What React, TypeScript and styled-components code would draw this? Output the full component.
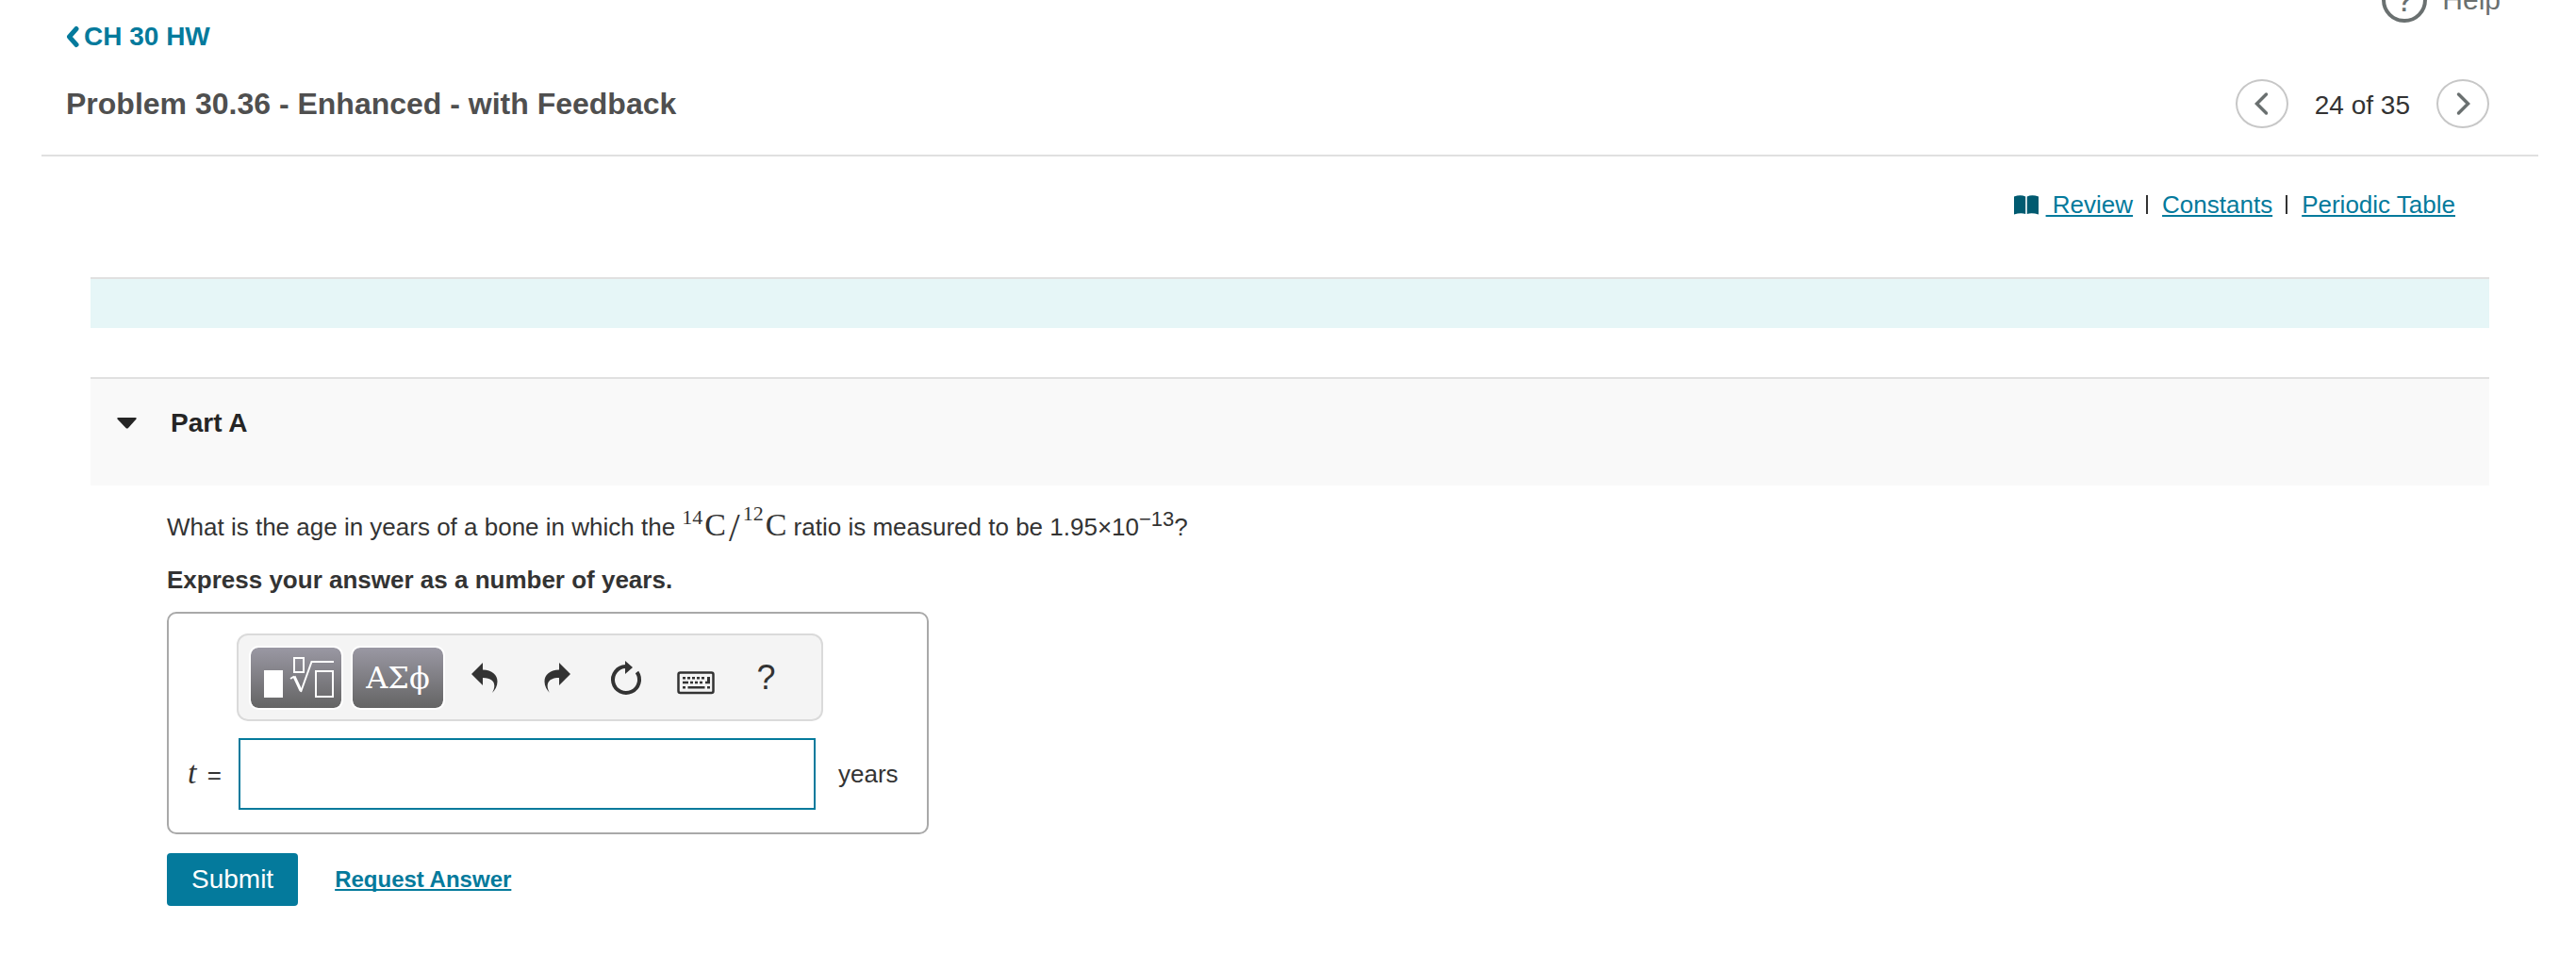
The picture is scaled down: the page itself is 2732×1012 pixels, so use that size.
import React, { useState } from "react";
import styled, { createGlobalStyle, css } from "styled-components";

const color = {
  link: "#047a9c",
  linkDark: "#005a70",
  text: "#333333",
  heading: "#4f4f4f",
  muted: "#6a7070",
  rule: "#e0e0e0",
};

const GlobalStyle = createGlobalStyle`
  *, *::before, *::after { box-sizing: border-box; }
  body {
    margin: 0;
    background: #ffffff;
    color: ${color.text};
    font-family: "Liberation Sans", Arial, sans-serif;
    font-size: 26px;
    line-height: 30px;
  }
  h1, h2, p { margin: 0; }
  button { font-family: inherit; cursor: pointer; }
  svg { display: block; flex: none; }
`;

const underline = css`
  text-decoration: underline;
  text-decoration-thickness: 2px;
  text-underline-offset: 2px;
  text-decoration-skip-ink: none;
`;

const Header = styled.header`
  margin: 0 40px 0 44px;
  border-bottom: 2px solid ${color.rule};
`;

const TopRow = styled.div`
  display: flex;
  justify-content: space-between;
  align-items: flex-start;
  height: 84px;
  padding: 0 40px 0 26px;
`;

const BackLink = styled.a`
  display: flex;
  align-items: center;
  gap: 3px;
  margin-top: 23px;
  color: ${color.link};
  font-size: 28px;
  line-height: 32px;
  font-weight: bold;
  text-decoration: none;
`;

const HelpLink = styled.a`
  display: flex;
  align-items: center;
  gap: 16px;
  margin-top: -24px;
  color: ${color.muted};
  font-size: 30px;
  line-height: 32px;
  text-decoration: none;
`;

const HelpMark = styled.span`
  display: grid;
  place-items: center;
  width: 48px;
  height: 48px;
  border: 4px solid ${color.muted};
  border-radius: 50%;
  font-size: 36px;
`;

const TitleRow = styled.div`
  display: flex;
  justify-content: space-between;
  align-items: center;
  padding: 0 52px 28px 26px;
`;

const Title = styled.h1`
  color: ${color.heading};
  font-size: 32px;
  line-height: 36px;
`;

const Pager = styled.nav`
  display: flex;
  align-items: center;
  gap: 28px;
  font-size: 28px;
  line-height: 32px;
`;

const PagerStatus = styled.span`
  padding-top: 4px;
`;

const PagerButton = styled.button`
  display: grid;
  place-items: center;
  width: 56px;
  height: 52px;
  padding: 0;
  border: 2px solid #c7c7c7;
  border-radius: 50%;
  background: none;
`;

const Main = styled.main`
  margin: 0 92px 0 96px;
`;

const ToolLinks = styled.nav`
  display: flex;
  justify-content: flex-end;
  align-items: center;
  gap: 14px;
  padding: 36px 36px 62px 0;
`;

const ToolLink = styled.a`
  display: flex;
  align-items: center;
  gap: 8px;
  color: ${color.link};
  text-decoration: none;
`;

const LinkText = styled.span`
  white-space: pre;
  ${underline}
`;

const Separator = styled.span`
  width: 2px;
  height: 20px;
  margin-right: 1px;
  background: ${color.text};
`;

const IntroBand = styled.div`
  height: 54px;
  margin-bottom: 52px;
  border-top: 2px solid ${color.rule};
  background: #e6f6f7;
`;

const PartHeader = styled.h2`
  padding: 31px 28px 50px;
  border-top: 2px solid ${color.rule};
  background: #f9f9f9;
  font-size: 28px;
  line-height: 32px;
`;

const PartToggle = styled.button`
  display: flex;
  align-items: center;
  gap: 35px;
  padding: 0;
  border: 0;
  background: none;
  color: #252525;
  font-size: inherit;
  font-weight: inherit;
  line-height: inherit;
`;

const PartBody = styled.section`
  padding: 16px 0 50px 81px;
`;

const Prompt = styled.p<{ $strong?: boolean }>`
  line-height: 56px;
  font-weight: ${(p) => (p.$strong ? "bold" : "normal")};
`;

const MathText = styled.span`
  font-family: "Liberation Serif", "Times New Roman", serif;
  font-size: 34px;
  line-height: 0;
`;

const Mass = styled.sup<{ $raised?: boolean }>`
  margin-right: 2px;
  font-size: 22px;
  line-height: 0;
  vertical-align: ${(p) => (p.$raised ? "16px" : "12px")};
`;

const Slash = styled.span`
  margin: 0 3px;
  font-size: 42px;
  vertical-align: -6px;
`;

const Exponent = styled.sup`
  font-size: 22px;
  line-height: 0;
  vertical-align: 10px;
`;

const AnswerBox = styled.div`
  width: 808px;
  max-width: 100%;
  margin-top: 6px;
  padding: 21px 20px 24px;
  border: 2px solid #a9a9a9;
  border-radius: 10px;
`;

const Toolbar = styled.div`
  display: flex;
  align-items: center;
  gap: 8px;
  width: 622px;
  margin: 0 0 18px 52px;
  padding: 11px 11px 10px;
  border: 2px solid #dadada;
  border-radius: 12px;
  background: #f4f4f4;
`;

const PaletteButton = styled.button`
  display: grid;
  place-items: center;
  width: 100px;
  height: 68px;
  padding: 0;
  border: 2px solid #ffffff;
  border-radius: 10px;
  background: linear-gradient(#9a98a3, #646464) padding-box;
  color: #ffffff;
  font-family: "DejaVu Serif", serif;
  font-size: 32px;
  line-height: 40px;
`;

const IconButton = styled.button`
  display: grid;
  place-items: center;
  width: 67px;
  height: 68px;
  padding: 0 2px 0 0;
  border: 0;
  background: none;
  color: ${color.text};
  font-size: 36px;
  line-height: 40px;
`;

const AnswerRow = styled.div`
  display: flex;
  align-items: center;
`;

const AnswerLabel = styled.label`
  display: flex;
  align-items: baseline;
  justify-content: space-between;
  width: 36px;
  margin-right: 18px;
`;

const Variable = styled.i`
  font-family: "Liberation Serif", "Times New Roman", serif;
  font-size: 34px;
`;

const AnswerInput = styled.input`
  width: 612px;
  height: 76px;
  margin-right: 24px;
  padding: 0 16px;
  border: 2px solid ${color.link};
  outline: none;
  background: #ffffff;
  color: ${color.text};
  font: inherit;
`;

const Actions = styled.div`
  display: flex;
  align-items: center;
  gap: 39px;
  margin-top: 20px;
`;

const SubmitButton = styled.button`
  height: 56px;
  padding: 0 26px;
  border: 0;
  border-radius: 4px;
  background: ${color.link};
  color: #ffffff;
  font-size: 28px;
  line-height: 32px;
`;

const RequestLink = styled.a`
  color: ${color.link};
  font-size: 24px;
  line-height: 28px;
  font-weight: bold;
  ${underline}
`;

const BackChevron = () => (
  <svg width="16" height="24" viewBox="0 0 16 24" fill="none" stroke={color.link} strokeWidth="5" strokeLinecap="round" strokeLinejoin="round" aria-hidden="true">
    <path d="M11 3.500 3.500 12l7.500 8.500" />
  </svg>
);

const Chevron = ({ right }: { right?: boolean }) => (
  <svg width="18" height="28" viewBox="0 0 18 28" fill="none" stroke={color.muted} strokeWidth="3.500" strokeLinecap="round" strokeLinejoin="miter" aria-hidden="true">
    <path d={right ? "M4.500 4 14.500 14 4.500 24" : "M13.500 4 3.500 14 13.500 24"} />
  </svg>
);

const BookIcon = () => (
  <svg width="26" height="21" viewBox="0 0 26 21" fill={color.linkDark} aria-hidden="true">
    <path d="M0 1.500Q7 -1 12.200 1.500V20Q7 18.500 0 20.500ZM26 1.500Q19 -1 13.800 1.500V20Q19 18.500 26 20.500Z" />
  </svg>
);

const TriangleIcon = () => (
  <svg width="22" height="12" viewBox="0 0 22 12" fill="#252525" aria-hidden="true">
    <path d="M1.500 0H19.500Q21.500 .3 20.300 1.800L12 11Q10.800 12 9.500 11L.7 1.800Q-.5 .3 1.500 0Z" />
  </svg>
);

const TemplateIcon = () => (
  <svg width="96" height="64" viewBox="0 0 96 64" fill="none" stroke="#ffffff" strokeWidth="2" aria-hidden="true">
    <rect x="14" y="24" width="20" height="29" fill="#ffffff" stroke="none" />
    <rect x="46" y="11" width="10" height="15" />
    <rect x="69" y="25" width="18" height="27" />
    <path d="M42 33 46 30.500" />
    <path d="M46 30.500 53 45.500" strokeWidth="3" />
    <path d="M53 47 64.500 15H88" />
  </svg>
);

const UndoIcon = () => (
  <svg width="48" height="48" viewBox="0 0 48 48" fill="currentColor" aria-hidden="true">
    <path d="M11 20 23 8V15.500C33 16 38.500 20.500 38.500 28C38.500 33 36 37 33 40C37.500 32 36 24 23 24V32Z" />
  </svg>
);

const RedoIcon = () => (
  <svg width="48" height="48" viewBox="0 0 48 48" fill="currentColor" aria-hidden="true">
    <path d="M41 20 29 8V15.500C19 16 13.500 20.500 13.500 28C13.500 33 16 37 19 40C14.500 32 16 24 29 24V32Z" />
  </svg>
);

const ResetIcon = () => (
  <svg width="48" height="48" viewBox="0 0 48 48" aria-hidden="true">
    <path d="M36.500 18A14 14 0 1 1 24.500 12" fill="none" stroke="currentColor" strokeWidth="4" />
    <path d="M24 6 32 13 24 20Z" fill="currentColor" />
  </svg>
);

const KeyboardIcon = () => (
  <svg width="48" height="48" viewBox="0 0 48 48" aria-hidden="true">
    <rect x="5.500" y="18.500" width="37" height="21.500" rx="2" fill="none" stroke="currentColor" strokeWidth="2.500" />
    <path
      transform="translate(1 0)"
      d="M9 23h3v2.400h-3zM14 23h3v2.400h-3zM19 23h3v2.400h-3zM24 23h3v2.400h-3zM29 23h3v2.400h-3zM35 23h3v7.200h-5v-2.400h2zM9 27.800h6v2.400h-6zM17 27.800h3v2.400h-3zM22 27.800h3v2.400h-3zM27 27.800h3v2.400h-3zM9 33h3v2.400h-3zM14.500 33h18v2.400h-18zM35 33h3v2.400h-3z"
      fill="currentColor"
    />
  </svg>
);

export default function App() {
  const [answer, setAnswer] = useState("");
  const [open, setOpen] = useState(true);

  return (
    <>
      <GlobalStyle />
      <Header>
        <TopRow>
          <BackLink href="#assignment">
            <BackChevron />
            CH 30 HW
          </BackLink>
          <HelpLink href="#help">
            <HelpMark aria-hidden="true">?</HelpMark>
            Help
          </HelpLink>
        </TopRow>
        <TitleRow>
          <Title>Problem 30.36 - Enhanced - with Feedback</Title>
          <Pager aria-label="Problems">
            <PagerButton type="button" aria-label="Previous problem">
              <Chevron />
            </PagerButton>
            <PagerStatus>24 of 35</PagerStatus>
            <PagerButton type="button" aria-label="Next problem">
              <Chevron right />
            </PagerButton>
          </Pager>
        </TitleRow>
      </Header>

      <Main>
        <ToolLinks aria-label="Resources">
          <ToolLink href="#review">
            <BookIcon />
            <LinkText>{" Review"}</LinkText>
          </ToolLink>
          <Separator />
          <ToolLink href="#constants">
            <LinkText>Constants</LinkText>
          </ToolLink>
          <Separator />
          <ToolLink href="#periodic-table">
            <LinkText>Periodic Table</LinkText>
          </ToolLink>
        </ToolLinks>

        <IntroBand />

        <PartHeader>
          <PartToggle type="button" aria-expanded={open} onClick={() => setOpen(!open)}>
            <TriangleIcon />
            Part A
          </PartToggle>
        </PartHeader>

        {open && (
          <PartBody>
            <Prompt>
              What is the age in years of a bone in which the{" "}
              <MathText>
                <Mass>14</Mass>C<Slash>/</Slash>
                <Mass $raised>12</Mass>C
              </MathText>{" "}
              ratio is measured to be 1.95×10<Exponent>−13</Exponent>?
            </Prompt>
            <Prompt $strong>Express your answer as a number of years.</Prompt>

            <AnswerBox>
              <Toolbar role="toolbar" aria-label="Equation tools">
                <PaletteButton type="button" aria-label="Templates">
                  <TemplateIcon />
                </PaletteButton>
                <PaletteButton type="button">ΑΣϕ</PaletteButton>
                <IconButton type="button" aria-label="Undo">
                  <UndoIcon />
                </IconButton>
                <IconButton type="button" aria-label="Redo">
                  <RedoIcon />
                </IconButton>
                <IconButton type="button" aria-label="Reset">
                  <ResetIcon />
                </IconButton>
                <IconButton type="button" aria-label="Keyboard shortcuts">
                  <KeyboardIcon />
                </IconButton>
                <IconButton type="button">?</IconButton>
              </Toolbar>
              <AnswerRow>
                <AnswerLabel htmlFor="answer">
                  <Variable>t</Variable>
                  <span>=</span>
                </AnswerLabel>
                <AnswerInput id="answer" type="text" autoComplete="off" value={answer} onChange={(e) => setAnswer(e.target.value)} />
                <span>years</span>
              </AnswerRow>
            </AnswerBox>

            <Actions>
              <SubmitButton type="button">Submit</SubmitButton>
              <RequestLink href="#request-answer">Request Answer</RequestLink>
            </Actions>
          </PartBody>
        )}
      </Main>
    </>
  );
}
